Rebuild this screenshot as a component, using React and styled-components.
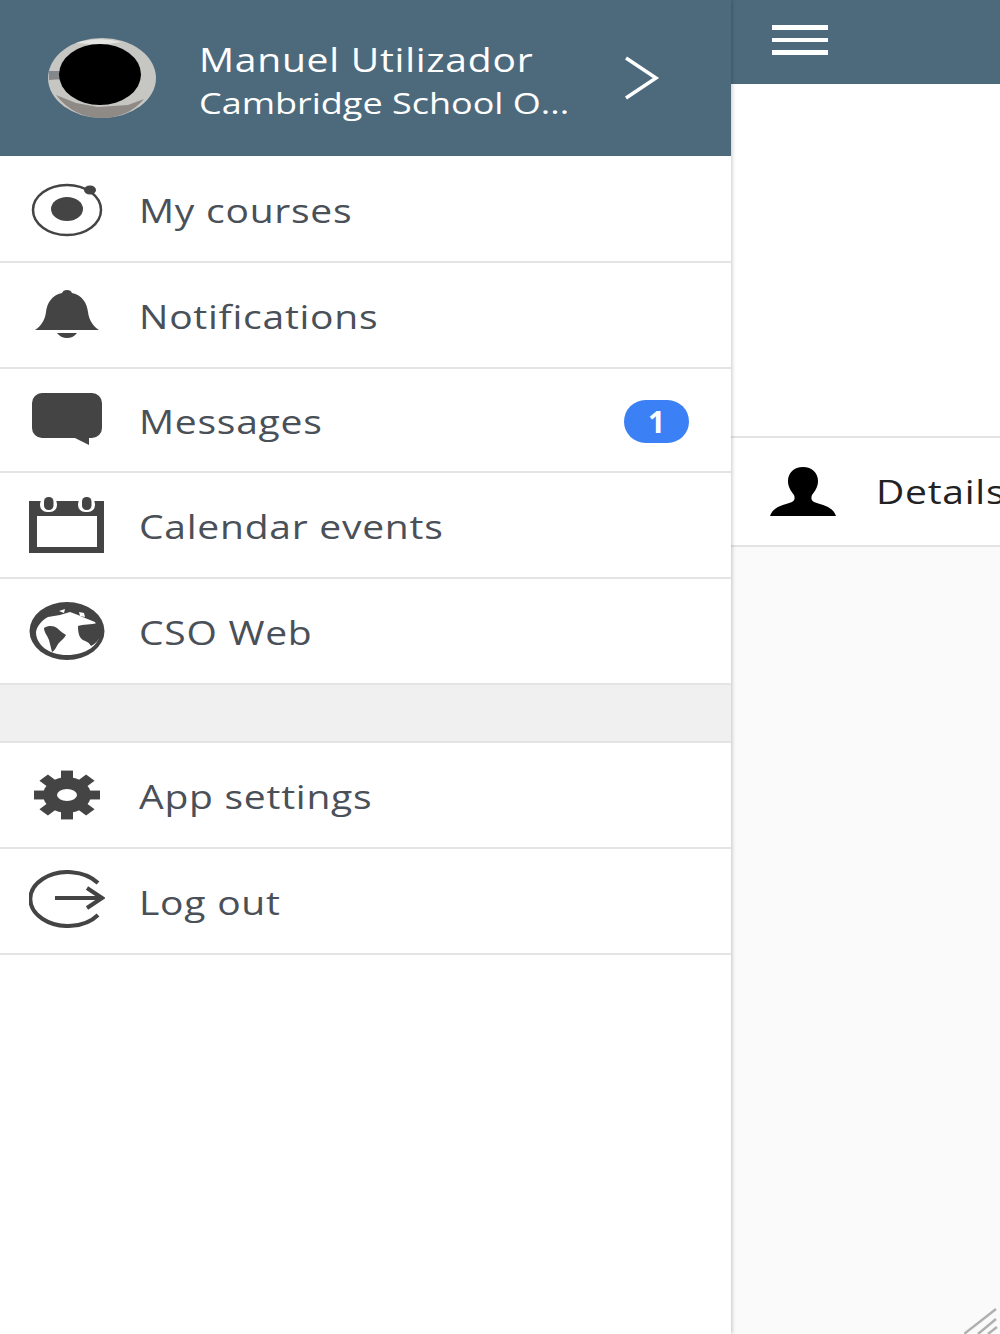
import styled, { createGlobalStyle } from 'styled-components';

const Global = createGlobalStyle`
  html, body { margin: 0; padding: 0; }
  body { font-family: "Open Sans", "Liberation Sans", sans-serif; background: #fff; }
`
const Page = styled.div`
  width: 1000px;
  height: 1334px;
  display: flex;
  overflow: hidden;
`
const Drawer = styled.div`
  width: 731px;
  flex: none;
  display: flex;
  flex-direction: column;
  background: #fff;
  box-shadow: 1px 0 4px rgba(0, 0, 0, 0.22);
  position: relative;
  z-index: 1;
`
const Profile = styled.div`
  height: 156px;
  flex: none;
  display: flex;
  align-items: center;
  background: #4d6a7d;
  color: #fff;
  padding: 0 71px 0 48px;
`
const Who = styled.div`
  flex: 1;
  margin-left: 43px;
  margin-top: 6px;
`
const Name = styled.div`
  font-size: 32px;
  line-height: 44px;
  letter-spacing: 0.6px;
  transform: scaleX(1.22);
  transform-origin: left center;
  white-space: nowrap;
`
const School = styled.div`
  font-size: 30px;
  line-height: 42px;
  transform: scaleX(1.2);
  transform-origin: left center;
  white-space: nowrap;
`
const Row = styled.div`
  height: ${props => props.$h || 104}px;
  flex: none;
  display: flex;
  align-items: center;
  border-bottom: 2px solid #e4e4e4;
  padding-right: 42px;
`
const IconSlot = styled.div`
  width: 134px;
  flex: none;
  display: flex;
  justify-content: center;
  transform: translateY(${props => props.$dy || 0}px);
`
const Label = styled.div`
  flex: 1;
  margin-left: 5px;
  margin-top: 3px;
  font-size: 32px;
  letter-spacing: 0.6px;
  color: #4a5058;
  transform: scaleX(1.22);
  transform-origin: left center;
`
const Badge = styled.div`
  width: 65px;
  height: 43px;
  margin-top: 3px;
  border-radius: 22px;
  background: #3b80f5;
  color: #fff;
  font-size: 30px;
  font-weight: 700;
  display: flex;
  align-items: center;
  justify-content: center;
`
const Spacer = styled.div`
  height: 56px;
  flex: none;
  background: #f0f0f0;
  border-bottom: 2px solid #e4e4e4;
`
const Main = styled.div`
  flex: 1;
  display: flex;
  flex-direction: column;
  position: relative;
  background: #fafafa;
  min-width: 0;
  overflow: hidden;
`
const TopBar = styled.div`
  height: 84px;
  flex: none;
  background: #4d6a7d;
  padding: 25px 0 0 41px;
  box-sizing: border-box;
`
const Burger = styled.div`
  width: 56px;
  display: flex;
  flex-direction: column;
  gap: 8px;
`
const BurgerBar = styled.span`
  height: 4.5px;
  background: #fff;
`
const Blank = styled.div`
  height: 352px;
  flex: none;
  background: #fff;
  border-bottom: 2px solid #e4e4e4;
`
const DetailsRow = styled.div`
  height: 107px;
  flex: none;
  display: flex;
  align-items: center;
  background: #fff;
  border-bottom: 2px solid #e4e4e4;
  padding-left: 39px;
  white-space: nowrap;
`
const DetailsLabel = styled.div`
  margin-left: 40px;
  font-size: 32px;
  letter-spacing: 0.6px;
  color: #222;
  transform: scaleX(1.22);
  transform-origin: left center;
`
const Grip = styled.svg`
  position: absolute;
  right: 2px;
  bottom: 0;
`

const dark = '#444'

const Avatar = () => (
  <svg width="108" height="82" viewBox="0 0 108 82">
    <ellipse cx="54" cy="41" rx="54" ry="40" fill="#c6c6c2" />
    <path d="M8 58 L28 66 L50 70 L80 68 L96 62 Q80 81 54 81 Q26 81 8 58Z" fill="#8f8a85" />
    <path d="M28 6 Q50 -1 74 5 L52 8Z" fill="#e4e4e2" />
    <path d="M1 34 L14 34 L15 42 L1 43Z" fill="#85888a" />
    <ellipse cx="52" cy="37.5" rx="41" ry="30.5" fill="#000" />
  </svg>
)

const Chevron = () => (
  <svg width="36" height="44" viewBox="0 0 36 44" fill="none" stroke="#fff" strokeWidth="3.5">
    <path d="M2 2 L32 22 L2 42" />
  </svg>
)

const CoursesIcon = () => (
  <svg width="72" height="54" viewBox="0 0 72 54">
    <ellipse cx="36" cy="27" rx="34" ry="25" fill="none" stroke={dark} strokeWidth="2.5" />
    <ellipse cx="36" cy="26" rx="16" ry="12" fill={dark} />
    <ellipse cx="59" cy="7" rx="6" ry="4.5" fill={dark} />
  </svg>
)

const BellIcon = () => (
  <svg width="64" height="48" viewBox="0 0 64 48">
    <path fill={dark} d="M32 0c3 0 4 1 5 3c10 2 15 10 16 19c1 8 5 14 11 18H0c6-4 10-10 11-18c1-9 6-17 16-19c1-2 2-3 5-3Z" />
    <path fill={dark} d="M22 43h20c-2 3-6 5-10 5s-8-2-10-5Z" />
  </svg>
)

const MessageIcon = () => (
  <svg width="70" height="52" viewBox="0 0 70 52">
    <rect x="0" y="0" width="70" height="45" rx="10" fill={dark} />
    <path d="M41 44 L57 52 L57 44Z" fill={dark} />
  </svg>
)

const CalendarIcon = () => (
  <svg width="76" height="56" viewBox="0 0 76 56">
    <rect x="0" y="4" width="75" height="52" fill={dark} />
    <rect x="8" y="19" width="60" height="31" fill="#fff" />
    <rect x="11" y="0" width="17" height="15" rx="7" fill="#fff" />
    <rect x="49" y="0" width="17" height="15" rx="7" fill="#fff" />
    <rect x="15" y="0" width="9.5" height="13" rx="4.5" fill={dark} />
    <rect x="53" y="0" width="9.5" height="13" rx="4.5" fill={dark} />
  </svg>
)

const GlobeIcon = () => (
  <svg width="76" height="58" viewBox="0 0 76 58">
    <ellipse cx="38" cy="29" rx="37.5" ry="29" fill={dark} />
    <path fill="#fff" d="M7 30C8 24 13 18 19 15L31 13L41 10L49 13L56 16L66 20L71 30C71 43 57 53 38 53C20 53 7 43 7 30Z" />
    <path fill="#fff" d="M30 9l6-2l-1 4ZM50 10l5 1l1 4l-5-1Z" />
    <path fill={dark} d="M15 26C20 23 25 24 28 26C31 29 34 31 37 33C35 37 31 39 29 42C27 46 25 49 23 50C22 46 21 42 20 38C18 33 15 30 15 26Z" />
    <path fill={dark} d="M49 24C54 22 62 23 69 21C72 25 73 29 72 33C70 38 66 42 62 44C60 40 56 39 54 38C51 36 49 33 49 24Z" />
  </svg>
)

const GearIcon = () => (
  <svg width="66" height="50" viewBox="0 0 66 50">
    <g transform="translate(33 25) scale(1 0.74)" fill={dark}>
      <circle r="24" />
      <rect x="-6" y="-33" width="12" height="66" />
      <rect x="-6" y="-33" width="12" height="66" transform="rotate(45)" />
      <rect x="-6" y="-33" width="12" height="66" transform="rotate(90)" />
      <rect x="-6" y="-33" width="12" height="66" transform="rotate(135)" />
      <ellipse rx="10" ry="8" fill="#fff" />
    </g>
  </svg>
)

const LogoutIcon = () => (
  <svg width="76" height="58" viewBox="0 0 76 58" fill="none" stroke={dark} strokeWidth="4">
    <path d="M69 13 A37.5 27 0 1 0 69 45" />
    <path d="M26 28 H73 M58 18 L73 28 L58 38" />
  </svg>
)

const PersonIcon = () => (
  <svg width="66" height="49" viewBox="0 0 66 49">
    <path fill="#000" d="M33 0c9 0 15 6 15 14c0 6-3 10-6 14c-1 3-1 5 2 7c7 3 19 4 22 14H0c3-10 15-11 22-14c3-2 3-4 2-7c-3-4-6-8-6-14C18 6 24 0 33 0Z" />
  </svg>
)

const menu = [
  { label: 'My courses', icon: <CoursesIcon />, h: 105, dy: 1 },
  { label: 'Notifications', icon: <BellIcon />, dy: -1 },
  { label: 'Messages', icon: <MessageIcon />, badge: 1, h: 102, dy: -1 },
  { label: 'Calendar events', icon: <CalendarIcon /> },
  { label: 'CSO Web', icon: <GlobeIcon /> },
]

const App = () => {
  return (
    <Page>
      <Global />
      <Drawer>
        <Profile>
          <Avatar />
          <Who>
            <Name>Manuel Utilizador</Name>
            <School>Cambridge School O...</School>
          </Who>
          <Chevron />
        </Profile>
        {menu.map(el => (
          <Row key={el.label} $h={el.h}>
            <IconSlot $dy={el.dy}>{el.icon}</IconSlot>
            <Label>{el.label}</Label>
            {el.badge && <Badge>{el.badge}</Badge>}
          </Row>
        ))}
        <Spacer />
        <Row>
          <IconSlot><GearIcon /></IconSlot>
          <Label>App settings</Label>
        </Row>
        <Row>
          <IconSlot $dy={-2}><LogoutIcon /></IconSlot>
          <Label>Log out</Label>
        </Row>
      </Drawer>
      <Main>
        <TopBar>
          <Burger>
            <BurgerBar />
            <BurgerBar />
            <BurgerBar />
          </Burger>
        </TopBar>
        <Blank />
        <DetailsRow>
          <PersonIcon />
          <DetailsLabel>Details</DetailsLabel>
        </DetailsRow>
        <Grip width="34" height="26" viewBox="0 0 34 26" stroke="#b0b0b0" strokeWidth="2.5">
          <path d="M0 26 L32 1 M14 26 L32 11 M24 26 L33 19" />
        </Grip>
      </Main>
    </Page>
  )
}

export default App
